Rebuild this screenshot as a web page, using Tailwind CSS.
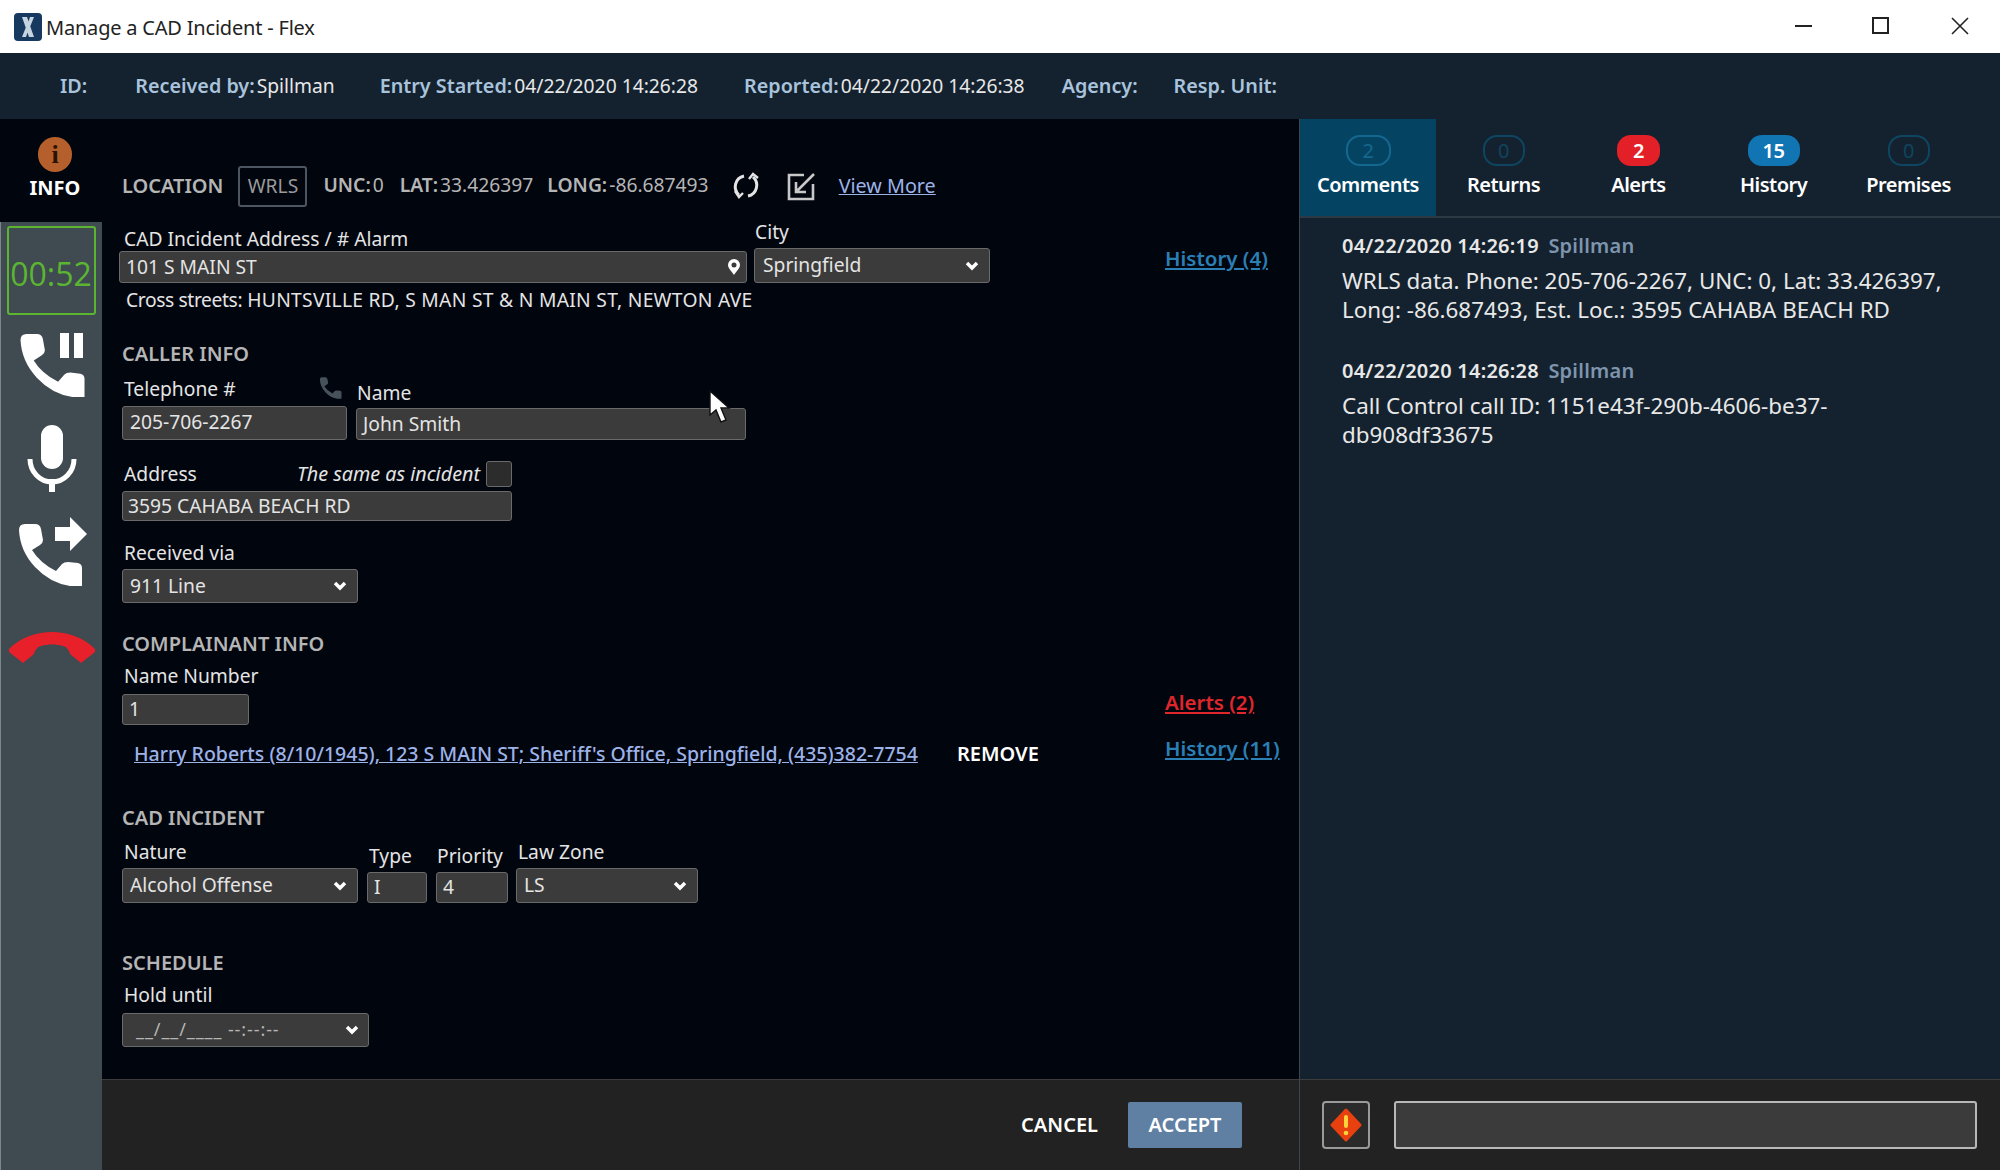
<!DOCTYPE html>
<html lang="en">
<head>
<meta charset="UTF-8">
<title>Manage a CAD Incident - Flex</title>
<script src="https://cdn.jsdelivr.net/npm/@tailwindcss/browser@4"></script>
</head>
<body class="w-[2000px] h-[1170px] overflow-hidden relative flex flex-col bg-[#01050e] text-[19.25px] text-[#e4e4e4] font-['Noto_Sans',sans-serif]">

  <!-- title bar -->
  <div class="h-[53px] bg-white flex items-center shrink-0 text-[#222]">
    <svg class="ml-[14px] w-[28px] h-[28px]" viewBox="0 0 28 28">
      <rect width="28" height="28" rx="4" fill="#17395f"/>
      <path d="M8 4 L13 4 L20 24 L15 24 Z M20 4 L16 14 L14 10 L16 4 Z M8 24 L12 14 L14 18 L12 24 Z" fill="#c6d4e2"/>
    </svg>
    <span class="ml-[4px] text-[20px] tracking-[-0.01em] mt-[2px]">Manage a CAD Incident - Flex</span>
    <div class="ml-auto flex items-center -mt-[2px]">
      <div class="w-[17px] h-[2px] bg-[#222] mr-[60px]"></div>
      <div class="w-[17px] h-[17px] border-2 border-[#222] mr-[62px]"></div>
      <svg class="w-[18px] h-[18px] mr-[31px]" viewBox="0 0 18 18"><path d="M1 1 L17 17 M17 1 L1 17" stroke="#222" stroke-width="1.6"/></svg>
    </div>
  </div>

  <!-- incident info bar -->
  <div class="h-[66px] bg-[#14222f] flex items-center pl-[60px] shrink-0 font-semibold text-[19.75px] text-[#a9c3dc]">
    <span>ID:</span>
    <span class="ml-[48px]">Received by:<span class="font-normal text-[19.25px] text-[#e8e8e8] ml-[2px]">Spillman</span></span>
    <span class="ml-[45px]">Entry Started:<span class="font-normal text-[19.25px] text-[#e8e8e8] ml-[2px]">04/22/2020 14:26:28</span></span>
    <span class="ml-[46px]">Reported:<span class="font-normal text-[19.25px] text-[#e8e8e8] ml-[2px]">04/22/2020 14:26:38</span></span>
    <span class="ml-[37px]">Agency:</span>
    <span class="ml-[36px]">Resp. Unit:</span>
  </div>

  <div class="flex-1 flex min-h-0">

    <!-- call controls -->
    <div class="w-[102px] shrink-0 flex flex-col items-center">
      <div class="h-[103px] w-full flex flex-col items-center pt-[18px] pl-[8px] shrink-0">
        <div class="w-[34px] h-[35px] rounded-full bg-[#b5602c] flex items-center justify-center text-[#2a1206] text-[26px] font-['Liberation_Serif',serif] font-bold">i</div>
        <div class="text-[20px] font-bold text-white leading-[24px] mt-[4px]">INFO</div>
      </div>
      <div class="flex-1 w-full bg-[#3f4a51] border-l border-[#7d868b] flex flex-col items-center">
        <div class="mt-[4px] -ml-[1px] w-[89px] h-[89px] border-2 border-[#5cb531] rounded-[3px] flex items-center justify-center text-[#5cb531] text-[32px] font-['Open_Sans',sans-serif] pt-[6px]">00:52</div>
        <div class="mt-[18px] relative w-[66px] h-[65px]">
          <svg class="w-full h-full" viewBox="0 0 64 64"><path fill="#fff" d="M1 7 Q1 1 7 1 L17 1 Q22 1 23 6 L25 17 Q25 20 22 22 L14 27 Q22 40 38 48 L44 41 Q46 39 50 39 L60 40 Q64 41 64 45 L64 63 L52 63 Q32 60 17 44 Q2 28 1 7 Z"/></svg>
          <div class="absolute top-0 left-[41px] w-[9px] h-[25px] bg-white"></div>
          <div class="absolute top-0 left-[55px] w-[9px] h-[25px] bg-white"></div>
        </div>
        <svg class="mt-[27px] w-[50px] h-[67px]" viewBox="0 0 50 67">
          <rect x="14" y="0" width="22" height="44" rx="11" fill="#fff"/>
          <path d="M3 34 A22 23 0 0 0 47 34" fill="none" stroke="#fff" stroke-width="5"/>
          <rect x="22" y="54" width="6" height="13" fill="#fff"/>
        </svg>
        <div class="mt-[25px] relative w-[70px] h-[70px]">
          <svg class="absolute left-0 top-[6px] w-[66px] h-[64px]" viewBox="0 0 64 64"><path fill="#fff" d="M1 7 Q1 1 7 1 L17 1 Q22 1 23 6 L25 17 Q25 20 22 22 L14 27 Q22 40 38 48 L44 41 Q46 39 50 39 L60 40 Q64 41 64 45 L64 63 L52 63 Q32 60 17 44 Q2 28 1 7 Z"/></svg>
          <svg class="absolute left-[38px] top-0 w-[32px] h-[34px]" viewBox="0 0 32 34"><path fill="#fff" d="M0 10 H15 V0 L32 17 L15 34 V24 H0 Z"/></svg>
        </div>
        <svg class="mt-[45px] w-[86px] h-[31px]" viewBox="0 0 86 31"><path fill="#e8202a" d="M0 17 C12 5 28 0 43 0 C58 0 74 5 86 17 L86 20 L72 31 L61 22 C60 18 58 15 54 14 C47 12 39 12 32 14 C28 15 26 18 25 22 L14 31 L0 20 Z"/></svg>
      </div>
    </div>

    <!-- form column -->
    <div class="w-[1197px] shrink-0 flex flex-col">
      <div class="flex-1 pl-[20px] pt-[47px]">

        <div class="h-[41px] flex items-center text-[#b5b5b5] font-semibold">
          <span class="text-[20px] mb-[2px]">LOCATION</span>
          <span class="ml-[15px] w-[69px] h-[41px] border-2 border-[#4d5660] rounded-[3px] flex items-center justify-center font-normal text-[#9a9a9a]">WRLS</span>
          <span class="ml-[16px] mb-[2px]">UNC:<span class="font-normal ml-[2px]">0</span></span>
          <span class="ml-[16px] mb-[2px]">LAT:<span class="font-normal ml-[2px]">33.426397</span></span>
          <span class="ml-[14px] mb-[2px]">LONG:<span class="font-normal ml-[2px]">-86.687493</span></span>
          <svg class="ml-[23px] mb-[2px] w-[28px] h-[30px]" viewBox="0 0 28 30" fill="none" stroke="#e4e4e4" stroke-width="3">
            <path d="M12 5 A11 11 0 0 0 7 24"/><path d="M16 25 A11 11 0 0 0 21 6"/>
            <path d="M3 20 L7 26 L11 22" stroke-width="2.4"/><path d="M17 8 L21 3 L26 7" stroke-width="2.4"/>
          </svg>
          <svg class="ml-[27px] w-[28px] h-[28px]" viewBox="0 0 28 28" fill="none" stroke="#c8c8c8" stroke-width="2.6">
            <path d="M17 2 H2 V26 H26 V11"/><path d="M27 1 L9 19 M9 9 V19 H19"/>
          </svg>
          <a class="ml-[24px] mb-[2px] font-normal text-[19.75px] text-[#9db3e8] underline">View More</a>
        </div>

        <div class="mt-[13px] flex items-end relative">
          <div class="-ml-[3px]">
            <div class="pl-[5px] leading-[24px]">CAD Incident Address / # Alarm</div>
            <div class="w-[628px] h-[32px] bg-[#3b3b3b] border border-[#6a6a6a] rounded-[3px] flex items-center justify-between px-[6px]">
              <span>101 S MAIN ST</span>
              <svg class="w-[12px] h-[16px]" viewBox="0 0 12 16"><path fill-rule="evenodd" fill="#fff" d="M6 0 A6 6 0 0 1 12 6 C12 9 8 13 6 16 C4 13 0 9 0 6 A6 6 0 0 1 6 0 Z M6 3.500 A2.500 2.500 0 1 0 6 8.500 A2.500 2.500 0 1 0 6 3.500 Z"/></svg>
            </div>
          </div>
          <div class="ml-[7px]">
            <div class="pl-[1px] leading-[24px] mb-[4px]">City</div>
            <div class="w-[236px] h-[35px] bg-[#3b3b3b] border border-[#6a6a6a] rounded-[3px] flex items-center justify-between pl-[8px] pr-[10px]">
              <span>Springfield</span>
              <svg class="w-[14px] h-[10px]" viewBox="0 0 14 10"><path d="M2 2 L7 7 L12 2" fill="none" stroke="#fff" stroke-width="3.500"/></svg>
            </div>
          </div>
          <a class="ml-[175px] mb-[9px] font-semibold text-[20.5px] text-[#2a7fb5] underline">History (4)</a>
        </div>
        <div class="mt-[5px] pl-[4px] leading-[24px]"><span class="tracking-[-0.02em]">Cross streets:</span> <span class="tracking-[0.015em]">HUNTSVILLE RD, S MAN ST &amp; N MAIN ST, NEWTON AVE</span></div>

        <div class="mt-[30px] leading-[24px] font-semibold text-[20px] text-[#b5b5b5]">CALLER INFO</div>
        <div class="mt-[11px] flex items-end gap-[9px]">
          <div>
            <div class="flex justify-between pr-[5px] pl-[2px] leading-[24px] mb-[5px]">
              <span>Telephone #</span>
              <svg class="w-[23px] h-[22px]" viewBox="0 0 64 64"><path fill="#47515a" d="M1 7 Q1 1 7 1 L17 1 Q22 1 23 6 L25 17 Q25 20 22 22 L14 27 Q22 40 38 48 L44 41 Q46 39 50 39 L60 40 Q64 41 64 45 L64 63 L52 63 Q32 60 17 44 Q2 28 1 7 Z"/></svg>
            </div>
            <div class="w-[225px] h-[34px] bg-[#3b3b3b] border border-[#6a6a6a] rounded-[3px] flex items-center px-[7px] pb-[2px]">205-706-2267</div>
          </div>
          <div>
            <div class="pl-[1px] leading-[24px] mb-[3px]">Name</div>
            <div class="w-[390px] h-[32px] bg-[#3b3b3b] border border-[#6a6a6a] rounded-[3px] flex items-center px-[6px]">John Smith</div>
          </div>
        </div>

        <div class="mt-[21px] w-[390px]">
          <div class="h-[26px] flex items-center mb-[4px]">
            <span class="pl-[2px]">Address</span>
            <span class="ml-auto italic text-[19.75px]">The same as incident</span>
            <span class="ml-[6px] w-[26px] h-[26px] bg-[#2c2c2c] border border-[#6a6a6a] rounded-[3px]"></span>
          </div>
          <div class="h-[30px] bg-[#3b3b3b] border border-[#6a6a6a] rounded-[3px] flex items-center px-[5px]">3595 CAHABA BEACH RD</div>
        </div>

        <div class="mt-[20px] pl-[2px] leading-[24px] mb-[4px]">Received via</div>
        <div class="w-[236px] h-[34px] bg-[#3b3b3b] border border-[#6a6a6a] rounded-[3px] flex items-center justify-between pl-[7px] pr-[10px]">
          <span>911 Line</span>
          <svg class="w-[14px] h-[10px]" viewBox="0 0 14 10"><path d="M2 2 L7 7 L12 2" fill="none" stroke="#fff" stroke-width="3.500"/></svg>
        </div>

        <div class="mt-[29px] leading-[24px] font-semibold text-[20px] text-[#b5b5b5]">COMPLAINANT INFO</div>
        <div class="mt-[8px] flex">
          <div class="w-[1043px]">
            <div class="pl-[2px] leading-[24px]">Name Number</div>
            <div class="mt-[6px] w-[127px] h-[31px] bg-[#3b3b3b] border border-[#6a6a6a] rounded-[3px] flex items-center px-[6px]">1</div>
            <div class="mt-[17px] pl-[12px] flex leading-[24px]">
              <a class="text-[#9db3e8] underline font-medium text-[19.5px]">Harry Roberts (8/10/1945), 123 S MAIN ST; Sheriff's Office, Springfield, (435)382-7754</a>
              <span class="ml-[39px] text-white font-semibold text-[20px]">REMOVE</span>
            </div>
          </div>
          <div class="pt-[26px] leading-[24px] font-semibold text-[20.5px]">
            <a class="block text-[#e0262c] underline">Alerts (2)</a>
            <a class="block mt-[22px] text-[#2a7fb5] underline">History (11)</a>
          </div>
        </div>

        <div class="mt-[40px] leading-[24px] font-semibold text-[20px] text-[#b5b5b5]">CAD INCIDENT</div>
        <div class="mt-[10px] flex items-end">
          <div>
            <div class="pl-[2px] leading-[24px] mb-[4px]">Nature</div>
            <div class="w-[236px] h-[35px] bg-[#3b3b3b] border border-[#6a6a6a] rounded-[3px] flex items-center justify-between pl-[7px] pr-[10px]">
              <span>Alcohol Offense</span>
              <svg class="w-[14px] h-[10px]" viewBox="0 0 14 10"><path d="M2 2 L7 7 L12 2" fill="none" stroke="#fff" stroke-width="3.500"/></svg>
            </div>
          </div>
          <div class="ml-[9px]">
            <div class="pl-[2px] leading-[24px] mb-[4px]">Type</div>
            <div class="w-[60px] h-[31px] bg-[#3b3b3b] border border-[#6a6a6a] rounded-[3px] flex items-center px-[6px]">I</div>
          </div>
          <div class="ml-[9px]">
            <div class="pl-[1px] leading-[24px] mb-[4px]">Priority</div>
            <div class="w-[72px] h-[31px] bg-[#3b3b3b] border border-[#6a6a6a] rounded-[3px] flex items-center px-[6px]">4</div>
          </div>
          <div class="ml-[8px]">
            <div class="pl-[2px] leading-[24px] mb-[4px]">Law Zone</div>
            <div class="w-[182px] h-[35px] bg-[#3b3b3b] border border-[#6a6a6a] rounded-[3px] flex items-center justify-between pl-[7px] pr-[10px]">
              <span>LS</span>
              <svg class="w-[14px] h-[10px]" viewBox="0 0 14 10"><path d="M2 2 L7 7 L12 2" fill="none" stroke="#fff" stroke-width="3.500"/></svg>
            </div>
          </div>
        </div>

        <div class="mt-[48px] leading-[24px] font-semibold text-[20px] text-[#b5b5b5]">SCHEDULE</div>
        <div class="mt-[8px] pl-[2px] leading-[24px]">Hold until</div>
        <div class="mt-[6px] w-[247px] h-[34px] bg-[#3b3b3b] border border-[#6a6a6a] rounded-[3px] flex items-center justify-between pl-[13px] pr-[9px] text-[#b5b5b5]">
          <span class="text-[18px] tracking-[0.05em] pb-[2px]">__/__/____ --:--:--</span>
          <svg class="w-[14px] h-[10px]" viewBox="0 0 14 10"><path d="M2 2 L7 7 L12 2" fill="none" stroke="#fff" stroke-width="3.500"/></svg>
        </div>
      </div>

      <div class="h-[91px] shrink-0 bg-[#222222] border-t border-[#3d3d3d] flex items-center justify-end pr-[57px] font-semibold text-[20px] text-white">
        <span>CANCEL</span>
        <div class="ml-[30px] w-[114px] h-[46px] bg-[#5f7fa3] rounded-[2px] flex items-center justify-center">ACCEPT</div>
      </div>
    </div>

    <!-- comments panel -->
    <div class="flex-1 flex flex-col border-l border-[#3a4650] bg-[#14222f] min-w-0">
      <div class="h-[99px] shrink-0 flex border-b-2 border-[#2c3a45] text-[20px] tracking-[-0.025em] font-semibold text-white">
        <div class="w-[136px] bg-[#054363] flex flex-col items-center pt-[16px]">
          <span class="w-[45px] h-[31px] border-2 border-[#14688f] rounded-[14px] flex items-center justify-center text-[#14688f] font-normal">2</span>
          <span class="mt-[5px] leading-[28px]">Comments</span>
        </div>
        <div class="w-[135px] flex flex-col items-center pt-[16px]">
          <span class="w-[42px] h-[31px] border-2 border-[#0e4560] rounded-[14px] flex items-center justify-center text-[#0e4560] font-normal">0</span>
          <span class="mt-[5px] leading-[28px]">Returns</span>
        </div>
        <div class="w-[135px] flex flex-col items-center pt-[16px]">
          <span class="w-[43px] h-[31px] bg-[#e32027] rounded-[14px] flex items-center justify-center">2</span>
          <span class="mt-[5px] leading-[28px]">Alerts</span>
        </div>
        <div class="w-[135px] flex flex-col items-center pt-[16px]">
          <span class="w-[52px] h-[31px] bg-[#1174b3] rounded-[14px] flex items-center justify-center">15</span>
          <span class="mt-[5px] leading-[28px]">History</span>
        </div>
        <div class="w-[135px] flex flex-col items-center pt-[16px]">
          <span class="w-[42px] h-[31px] border-2 border-[#0e4560] rounded-[14px] flex items-center justify-center text-[#0e4560] font-normal">0</span>
          <span class="mt-[5px] leading-[28px]">Premises</span>
        </div>
      </div>

      <div class="flex-1 pl-[42px] pr-[40px] pt-[13px] text-[22.4px] leading-[29px] text-[#e8e8e8]">
        <div class="font-semibold text-[20px] tracking-[0.012em]">04/22/2020 14:26:19 <span class="ml-[4px] text-[#7f95ad]">Spillman</span></div>
        <div class="mt-[6px]">WRLS data. Phone: 205-706-2267, UNC: 0, Lat: 33.426397, Long: -86.687493, Est. Loc.: 3595 CAHABA BEACH RD</div>
        <div class="mt-[32px] font-semibold text-[20px] tracking-[0.012em]">04/22/2020 14:26:28 <span class="ml-[4px] text-[#7f95ad]">Spillman</span></div>
        <div class="mt-[6px]">Call Control call ID: 1151e43f-290b-4606-be37-db908df33675</div>
      </div>

      <div class="h-[91px] shrink-0 bg-[#222222] border-t border-[#3d3d3d] flex items-center pl-[22px]">
        <div class="w-[48px] h-[48px] bg-[#2a2a2a] border-2 border-[#9a9a9a] rounded-[4px] flex items-center justify-center">
          <svg class="w-[32px] h-[34px]" viewBox="0 0 32 34">
            <path d="M16 2 L30 17 L16 32 L2 17 Z" fill="#e8400f" stroke="#e8400f" stroke-width="3" stroke-linejoin="round"/>
            <rect x="14" y="7" width="4" height="13" rx="2" fill="#ffd23a"/>
            <circle cx="16" cy="25" r="2.300" fill="#ffd23a"/>
          </svg>
        </div>
        <div class="ml-[24px] w-[583px] h-[48px] bg-[#3b3b3b] border-2 border-[#b8b8b8] rounded-[3px]"></div>
      </div>
    </div>
  </div>

  <!-- mouse pointer -->
  <svg class="absolute left-[708px] top-[390px] w-[24px] h-[34px]" viewBox="0 0 24 34">
    <path d="M2 1 L2 25 L8 20 L13 32 L18 30 L13 18 L21 18 Z" fill="#fff" stroke="#111" stroke-width="1.400"/>
  </svg>
</body>
</html>
